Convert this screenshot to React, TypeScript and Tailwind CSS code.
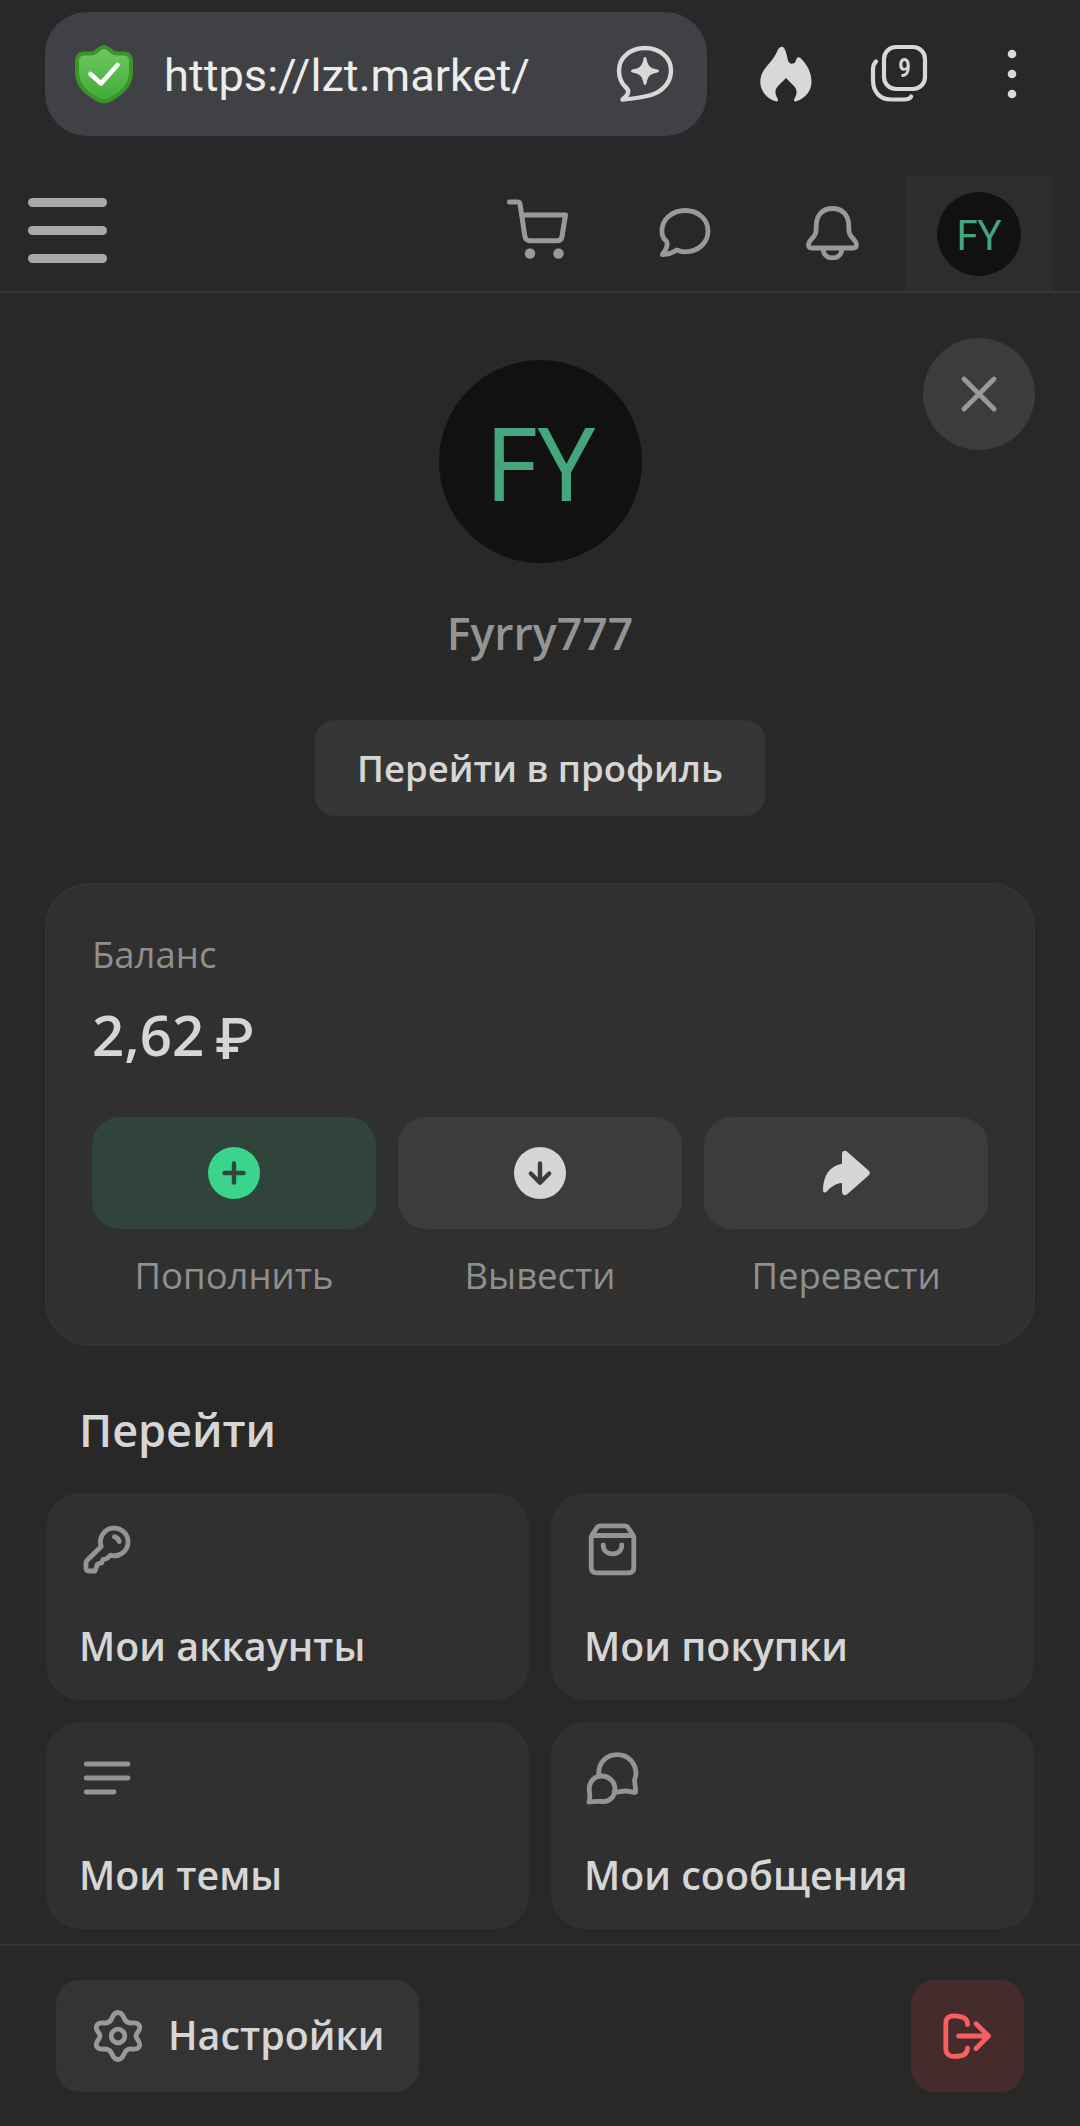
import React from "react";

interface IconProps {
	className?: string;
}

interface StrokeIconProps extends IconProps {
	children: React.ReactNode;
}

const StrokeIcon: React.FC<StrokeIconProps> = ({ className, children }) => (
	<svg
		viewBox="0 0 56 56"
		className={`size-14 shrink-0 ${className ?? ""}`}
		fill="none"
		stroke="currentColor"
		strokeWidth={4.8}
		strokeLinecap="round"
		strokeLinejoin="round"
	>
		{children}
	</svg>
);

const ShieldIcon: React.FC = () => (
	<svg viewBox="0 0 62 62" className="size-[62px] shrink-0">
		<defs>
			<linearGradient id="shield" x1="0" y1="0" x2="0" y2="1">
				<stop offset="0" stopColor="#6fcb61" />
				<stop offset="1" stopColor="#3fa936" />
			</linearGradient>
		</defs>
		<path
			d="M31 4C34.500 4 37 7.500 40 9.500C44 11.500 48 10 52 10.500C56 11 58 13.500 58 18V29C58 42 50 49 40 55C36 57.500 34 58.500 31 58.500S26 57.500 22 55C12 49 4 42 4 29V18C4 13.500 6 11 10 10.500C14 10 18 11.500 22 9.500C25 7.500 27.500 4 31 4Z"
			fill="url(#shield)"
			stroke="#3a9529"
			strokeWidth={4}
		/>
		<path
			d="M17.500 31L28 40.500L44.500 22"
			fill="none"
			stroke="#fff"
			strokeWidth={4.6}
			strokeLinecap="round"
			strokeLinejoin="round"
		/>
	</svg>
);

const AssistantIcon: React.FC = () => (
	<svg
		viewBox="0 0 64 64"
		className="size-16 shrink-0"
		fill="none"
		stroke="currentColor"
		strokeWidth={4.4}
		strokeLinejoin="round"
	>
		<path d="M13 45.500C8 41 6 35 6 28.500C6 15.500 17.500 6 32 6S58 15.500 58 28.500C58 41 49 49.500 38 53C30 55.300 20 56.800 9.500 57.500C14.500 53.500 17.500 49.500 13 45.500Z" />
		<path
			d="M32 15C33 15 33.400 16 33.700 17.500C35 24 37 26 43.500 27.300C45 27.600 46 28 46 29S45 30.400 43.500 30.700C37 32 35 34 33.700 40.500C33.400 42 33 43 32 43S30.600 42 30.300 40.500C29 34 27 32 20.500 30.700C19 30.400 18 30 18 29S19 27.600 20.500 27.300C27 26 29 24 30.300 17.500C30.600 16 31 15 32 15Z"
			fill="currentColor"
			stroke="none"
		/>
	</svg>
);

const FlameIcon: React.FC = () => (
	<svg viewBox="0 0 60 60" className="size-15 shrink-0" fill="currentColor">
		<path d="M25 3C27 2 28.500 4 29.500 7C30.700 10.500 31.200 13 32 16.500C32.600 19 34.500 20 37 19.500C39.500 19 39.500 17.500 40 16C41 12.500 43 12.500 45 14.500C51.500 21 55.500 29 55.500 38C55.500 47 49 54.500 40.500 57.300C37.500 58 37.500 56 39 53.500C41.500 49.500 41 45 37.500 41.500L30 34L22.500 41.500C19 45 18.500 49.500 21 53.500C22.500 56 22.500 58 19.500 57.300C11 54.500 4.300 47 4.300 38C4.300 29 8.500 25 14 18.500C18.500 13 20.500 9 22 5.500C23 3.700 24 3.200 25 3Z" />
	</svg>
);

const TabsIcon: React.FC = () => (
	<svg
		viewBox="0 0 64 64"
		className="size-16 shrink-0"
		fill="none"
		stroke="currentColor"
		strokeWidth={4.2}
		strokeLinecap="round"
	>
		<rect x="16" y="5" width="41" height="42" rx="12" />
		<path d="M8 19.500C6 21.500 5 24 5 27V38C5 50 12 57.500 23 57.500H36C39.500 57.500 42 56.800 43.200 54.500" />
		<text
			x="36.500"
			y="34.500"
			textAnchor="middle"
			fill="currentColor"
			stroke="none"
			className="font-['Roboto'] text-[25px] font-bold"
			textLength="12.500"
			lengthAdjust="spacingAndGlyphs"
		>
			9
		</text>
	</svg>
);

const DotsIcon: React.FC = () => (
	<svg viewBox="0 0 10 50" className="h-[50px] w-2.5 shrink-0" fill="currentColor">
		<circle cx="5" cy="5" r="4.300" />
		<circle cx="5" cy="25" r="4.300" />
		<circle cx="5" cy="45" r="4.300" />
	</svg>
);

const CartIcon: React.FC = () => (
	<svg
		viewBox="0 0 68 68"
		className="size-[68px]"
		fill="none"
		stroke="currentColor"
		strokeWidth={5}
		strokeLinecap="round"
		strokeLinejoin="round"
	>
		<path d="M5.500 5H13.500C15 5 15.800 5.600 16 7L20.800 39C21.300 42.300 23 43.800 26 43.800H53C56 43.800 57.500 42.500 58 39.500L61.500 18H18" />
		<circle cx="26" cy="56.500" r="5.200" fill="currentColor" stroke="none" />
		<circle cx="54.500" cy="56.500" r="5.200" fill="currentColor" stroke="none" />
	</svg>
);

const ChatIcon: React.FC = () => (
	<StrokeIcon>
		<path d="M9.700 37.500C6.500 35 4.900 31 4.900 27C4.900 15 15.500 6.500 28.200 6.500S51 15 51 27S41 47.800 28.200 47.800C24.700 47.800 22.500 47.300 19.700 46C16.200 48.500 11 50.800 5.400 50.500C7.700 47.500 11.200 41.500 9.700 37.500Z" />
	</StrokeIcon>
);

const BellIcon: React.FC = () => (
	<StrokeIcon>
		<path d="M28.500 4.500C18.500 4.500 12.500 11.500 12.300 21C12.200 28 12 30 9 33.500C6 36.500 4.500 38.500 4.500 41C4.500 43 5.700 44 8 44H49C51.300 44 52.500 43 52.500 41C52.500 38.500 51 36.500 48 33.500C45 30 44.800 28 44.700 21C44.500 11.500 38.500 4.500 28.500 4.500Z" />
		<path d="M19 45C19.500 50.500 23 54 28.500 54S37.500 50.500 38 45" />
	</StrokeIcon>
);

const KeyIcon: React.FC = () => (
	<StrokeIcon>
		<path d="M22.200 25.500A13.800 13.800 0 1 1 31.500 34.200L28 37.500L24 38.500L22.500 42L18.500 43L17.500 46L16 50H9.800C8 50 7 49 7 47.300V42C7 40.700 7.300 40 8.200 39.200Z" />
		<path d="M35.500 15.800C38 16.300 39.600 18 40.200 20.500" />
	</StrokeIcon>
);

const BagIcon: React.FC = () => (
	<StrokeIcon>
		<path d="M7.200 17C7.200 15.500 7.500 14.700 8.300 13.500L13 6.500C13.700 5.300 14.500 4.800 16 4.800H41C42.500 4.800 43.300 5.300 44 6.500L48.700 13.500C49.500 14.700 49.800 15.500 49.800 17V46.500C49.800 50 48 51.800 44.500 51.800H12.500C9 51.800 7.200 50 7.200 46.500Z" />
		<path d="M9 14.500H48" />
		<path d="M19.200 24C19.200 29.500 23 32.800 28.500 32.800S37.800 29.500 37.800 24" />
	</StrokeIcon>
);

const ThreadsIcon: React.FC = () => (
	<StrokeIcon>
		<path d="M7.200 14H49M7.200 28H49M7.200 42H35" />
	</StrokeIcon>
);

const MessagesIcon: React.FC = () => (
	<StrokeIcon>
		<path d="M14.800 25C14 12.500 22.500 4.600 33.200 4.600S52 13 52 24C52 27 50.500 28 50.600 30.500C51 35 51.800 38 51.500 42.300C49 42.600 46 41 41.500 41C37 41 34 42.300 30 42" />
		<path d="M5 52C6.700 47 5.500 43.500 5.200 39.500C5.200 31.500 10.500 26 17.700 26S31 31.500 31 39S25.500 52 18.500 51.500C14 51.200 10 51.200 5 52Z" />
	</StrokeIcon>
);

const GearIcon: React.FC = () => (
	<StrokeIcon className="text-[#999]">
		<path d="M28 4.500C31 4.500 32.500 6.500 33.800 9.500C35.500 13.800 37.500 15.300 41.500 15C46 14.600 48.300 15.300 49.300 17.500C50.500 20 49.500 22 47.500 24.500C45.500 27 45.500 29 47.500 31.500C49.500 34 50.500 36 49.300 38.500C48.300 40.700 46 41.400 41.500 41C37.500 40.700 35.500 42.200 33.800 46.500C32.500 49.500 31 51.500 28 51.500S23.500 49.500 22.200 46.500C20.500 42.200 18.500 40.700 14.500 41C10 41.400 7.700 40.700 6.700 38.500C5.500 36 6.500 34 8.500 31.500C10.500 29 10.500 27 8.500 24.500C6.500 22 5.500 20 6.700 17.500C7.700 15.300 10 14.600 14.500 15C18.500 15.300 20.500 13.800 22.200 9.500C23.500 6.500 25 4.500 28 4.500Z" />
		<circle cx="28" cy="28" r="6.800" />
	</StrokeIcon>
);

const LogoutIcon: React.FC = () => (
	<StrokeIcon className="text-[#fa5f5f]">
		<path d="M28.600 16.500C28.300 11.500 26.500 9.700 22.500 8.800C12 6.500 6.800 8 6.800 16V40C6.800 48 12 49.800 22.500 47.600C26.500 46.700 28.300 44.500 28.600 40" />
		<path d="M19.500 28H49.500M37 15.800L49.500 28L37 40.500" />
	</StrokeIcon>
);

const DepositIcon: React.FC = () => (
	<svg viewBox="0 0 52 52" className="size-13 text-[#30463c]">
		<circle cx="26" cy="26" r="26" fill="#3ad48c" />
		<path d="M26 16.500V35.500M16.500 26H35.500" stroke="currentColor" strokeWidth={4.4} strokeLinecap="round" />
	</svg>
);

const WithdrawIcon: React.FC = () => (
	<svg viewBox="0 0 52 52" className="size-13 text-[#3c3c3c]">
		<circle cx="26" cy="26" r="26" fill="#d6d6d6" />
		<path
			d="M26 16.500V35.500M16.800 26.500L26 35.800L35.200 26.500"
			fill="none"
			stroke="currentColor"
			strokeWidth={4.4}
			strokeLinecap="round"
			strokeLinejoin="round"
		/>
	</svg>
);

const TransferIcon: React.FC = () => (
	<svg viewBox="0 0 56 56" className="size-14" fill="#d6d6d6">
		<path d="M24 9C24 6 27 4.800 29.500 7L50.500 25.500C52.300 27 52.300 29 50.500 30.500L29.500 49C27 51.200 24 50 24 47V38C17 38.500 12.500 42.500 8.700 46.600C6.700 48.500 5 47.500 5 45C5 32 11 21 24 18.800Z" />
	</svg>
);

const quickActions = [
	{ label: "Пополнить", icon: <DepositIcon />, color: "bg-[#30443b]" },
	{ label: "Вывести", icon: <WithdrawIcon />, color: "bg-[#3c3c3c]" },
	{ label: "Перевести", icon: <TransferIcon />, color: "bg-[#3c3c3c]" },
];

const links = [
	{ label: "Мои аккаунты", icon: <KeyIcon /> },
	{ label: "Мои покупки", icon: <BagIcon /> },
	{ label: "Мои темы", icon: <ThreadsIcon /> },
	{ label: "Мои сообщения", icon: <MessagesIcon /> },
];

const BrowserBar: React.FC = () => (
	<div className="flex h-[175px] shrink-0 items-start bg-[#27282a] pt-3 pl-[45px] text-[#d8d8d8]">
		<div className="flex h-[124px] w-[662px] items-center rounded-[42px] bg-[#404144] pr-[30px] pl-7">
			<ShieldIcon />
			<span className="ml-[29px] pt-[3px] font-['Roboto'] text-[45.2px] whitespace-nowrap text-[#ececec]">
				https://lzt.market/
			</span>
			<div className="ml-auto">
				<AssistantIcon />
			</div>
		</div>
		<div className="flex h-[124px] items-center">
			<div className="ml-[49px]">
				<FlameIcon />
			</div>
			<div className="ml-[52px]">
				<TabsIcon />
			</div>
			<div className="ml-[75px]">
				<DotsIcon />
			</div>
		</div>
	</div>
);

const Header: React.FC = () => (
	<header className="flex h-[118px] shrink-0 items-stretch border-b-2 border-[#363636] bg-[linear-gradient(#262829_9px,#282828_9px)] pr-7 pl-7 text-[#999]">
		<button className="mt-[23px] flex h-[65px] w-[79px] flex-col justify-between">
			<span className="h-[9px] w-full rounded-full bg-[#a9a9a9]" />
			<span className="h-[9px] w-full rounded-full bg-[#a9a9a9]" />
			<span className="h-[9px] w-full rounded-full bg-[#a9a9a9]" />
		</button>
		<nav className="ml-auto flex">
			<button className="flex w-[147px] items-center justify-center pb-1">
				<CartIcon />
			</button>
			<button className="flex w-[147px] items-center justify-center pb-0.5">
				<ChatIcon />
			</button>
			<button className="flex w-[147px] items-center justify-center pb-0.5">
				<BellIcon />
			</button>
			<button className="flex w-[147px] items-center justify-center bg-[#2d2d2d] pt-0.5">
				<span className="flex size-[84px] items-center justify-center rounded-full bg-[#111] font-['Noto_Sans'] text-[42px] leading-none text-[#45a67d]">
					FY
				</span>
			</button>
		</nav>
	</header>
);

const BalanceCard: React.FC = () => (
	<section className="mt-[67px] h-[463px] rounded-[44px] border-2 border-[#343434] bg-[#303030] px-[45px] pt-[45px]">
		<p className="text-[36.5px] leading-[48px] text-[#8f8f8f]">Баланс</p>
		<p className="mt-[21px] h-[72px] text-[56.5px] leading-[72px] font-semibold text-[#d6d6d6]">
			2,62
			<span className="ml-[10px] align-[-3px] font-['Inter'] leading-none font-medium">₽</span>
		</p>
		<div className="mt-[46px] grid grid-cols-3 gap-[22px]">
			{quickActions.map((action) => (
				<div key={action.label} className="flex flex-col items-center">
					<button
						className={`flex h-28 w-full items-center justify-center rounded-[28px] ${action.color}`}
					>
						{action.icon}
					</button>
					<span className="mt-[22px] text-[36.5px] leading-[48px] text-[#8f8f8f]">
						{action.label}
					</span>
				</div>
			))}
		</div>
	</section>
);

const App: React.FC = () => {
	return (
		<div className="flex h-[2126px] w-[1080px] flex-col overflow-hidden bg-[#282828] font-['Open_Sans','Noto_Sans',sans-serif]">
			<BrowserBar />
			<Header />

			<main className="relative flex-1 px-[45px] pt-[67px]">
				<button className="absolute top-[45px] right-[45px] flex size-28 items-center justify-center rounded-full bg-[#3c3c3c] text-[#999]">
					<StrokeIcon>
						<path d="M13 13L43 43M43 13L13 43" />
					</StrokeIcon>
				</button>

				<div className="flex flex-col items-center">
					<div className="flex size-[203px] items-center justify-center rounded-full bg-[#111] font-['Noto_Sans'] text-[102px] leading-none text-[#45a67d]">
						FY
					</div>
					<h1 className="mt-[40px] text-[44.6px] leading-[60px] font-semibold text-[#949494]">
						Fyrry777
					</h1>
					<button className="mt-[57px] flex h-24 w-[450px] items-center justify-center rounded-[20px] bg-[#363636] text-[36.5px] font-semibold text-[#d6d6d6]">
						Перейти в профиль
					</button>
				</div>

				<BalanceCard />

				<h2 className="mt-[54px] ml-[34px] text-[45px] leading-[60px] font-semibold text-[#d6d6d6]">
					Перейти
				</h2>
				<div className="mx-px mt-[33px] grid grid-cols-2 gap-x-[22px] gap-y-[22px]">
					{links.map((link) => (
						<a
							key={link.label}
							className="h-[207px] rounded-[34px] bg-[#303030] px-[33px] pt-7 text-[#949494]"
						>
							{link.icon}
							<span className="mt-[42px] block text-[39.4px] leading-[54px] font-semibold whitespace-nowrap text-[#d6d6d6]">
								{link.label}
							</span>
						</a>
					))}
				</div>
			</main>

			<footer className="flex h-[182px] shrink-0 items-start justify-between border-t-2 border-[#363636] px-14 pt-[34px]">
				<button className="flex h-28 w-[363px] items-center rounded-[24px] bg-[#343434] pl-[34px] text-[39.4px] font-semibold text-[#d6d6d6]">
					<GearIcon />
					<span className="ml-[22px]">Настройки</span>
				</button>
				<button className="flex h-28 w-[113px] items-center justify-center rounded-[24px] bg-[#452b2c] pr-0.5">
					<LogoutIcon />
				</button>
			</footer>
		</div>
	);
};

export default App;
